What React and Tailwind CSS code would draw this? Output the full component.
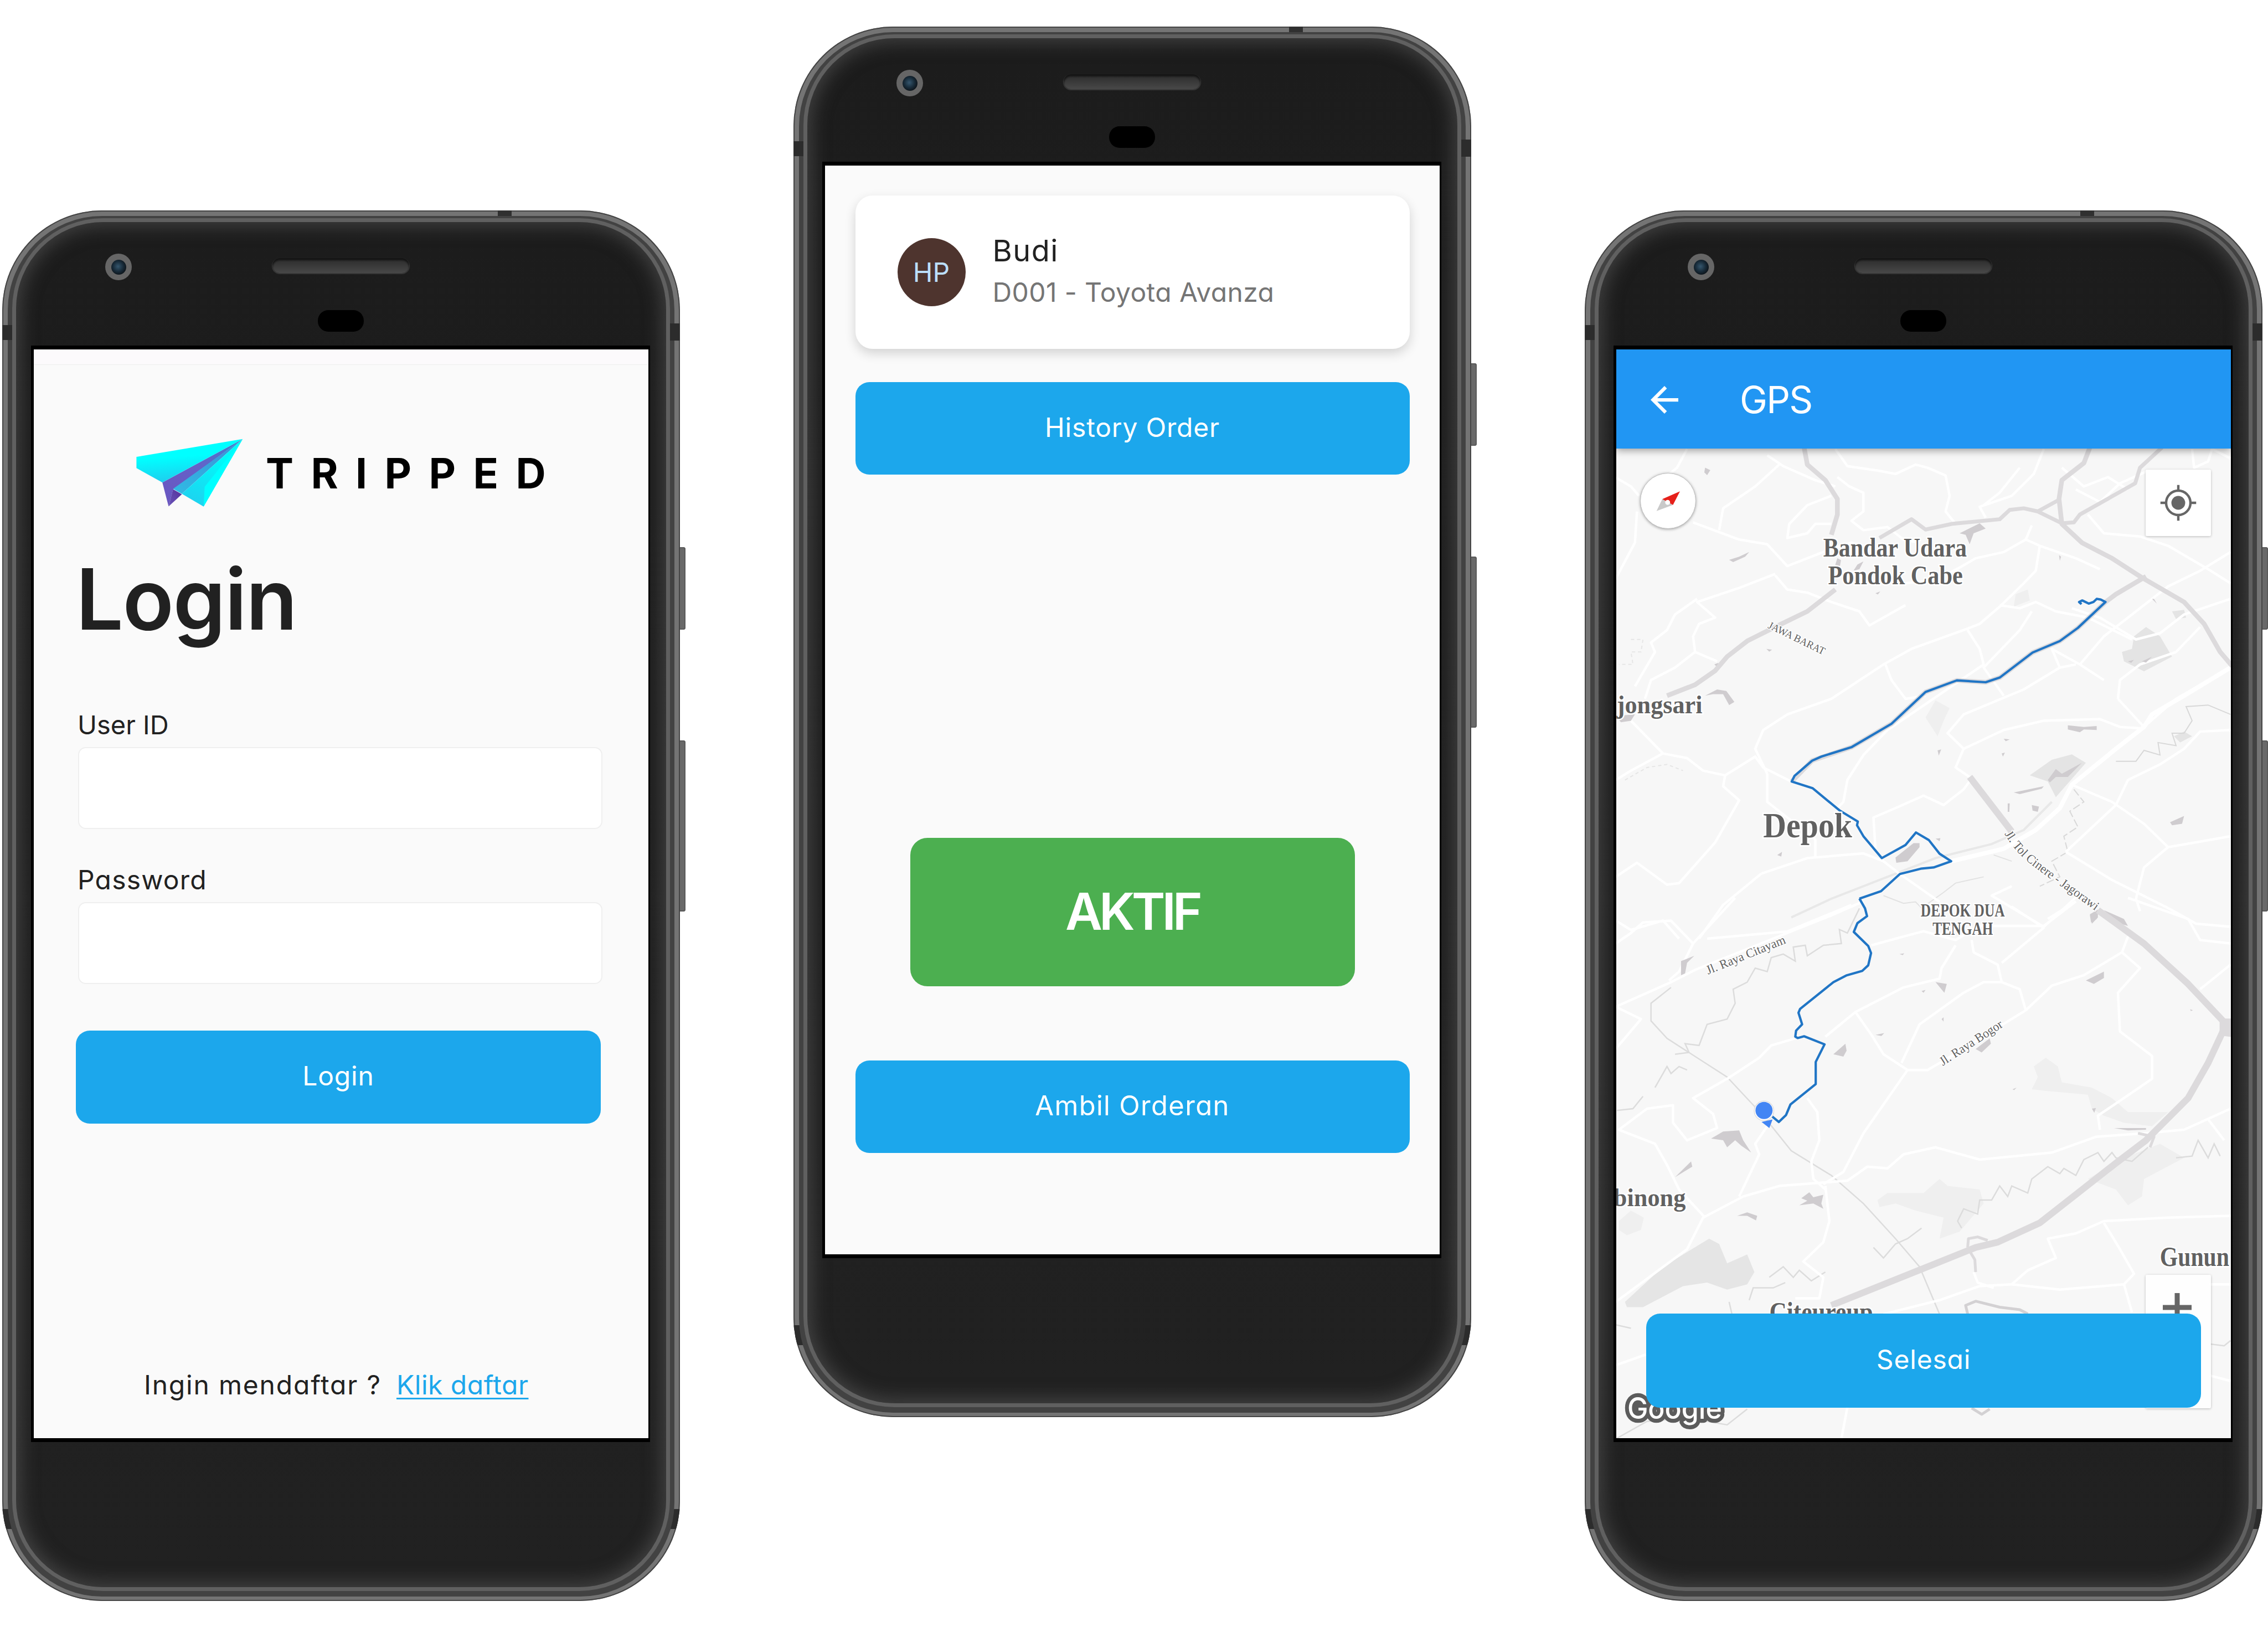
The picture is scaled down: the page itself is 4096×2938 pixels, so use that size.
import React from "react";

function Phone({ className = "", children }) {
  return (
    <div className={"relative h-[2511px] w-[1224px] shrink-0 " + className}>
      <div className="absolute left-[1218px] top-[608px] h-[149px] w-[16px] rounded-[4px] bg-[#696969] shadow-[inset_0_0_0_2px_#5a5a5a]" />
      <div className="absolute left-[1218px] top-[957px] h-[309px] w-[16px] rounded-[4px] bg-[#696969] shadow-[inset_0_0_0_2px_#5a5a5a]" />
      <div className="relative h-full w-full overflow-hidden rounded-[180px] bg-[#747474] px-[10px] pb-[8px] pt-[10px] shadow-[inset_0_0_0_2px_#454545]">
        <div className="absolute left-[895px] top-0 h-[13px] w-[25px] bg-[#303030]" />
        <div className="absolute left-0 top-[207px] z-10 h-[27px] w-[18px] bg-[#2c2c2c]" />
        <div className="absolute right-0 top-[204px] z-10 h-[31px] w-[18px] bg-[#2c2c2c]" />
        <div className="absolute left-0 top-[2345px] h-[36px] w-[28px] bg-[#2c2c2c]" />
        <div className="absolute right-0 top-[2345px] h-[36px] w-[28px] bg-[#2c2c2c]" />
        <div className="relative h-full w-full rounded-[170px] bg-[#424242] px-[8px] pb-[10px] pt-[4px]">
          <div className="h-full w-full rounded-[164px] bg-[#606060] p-[7px]">
            <div className="h-full w-full rounded-[157px] bg-gradient-to-b from-[#1c1c1c] to-[#212121] shadow-[inset_0_0_32px_8px_rgba(100,100,100,0.5)]">
              <div className="flex h-[223px] items-start pl-[161px] pt-[57px]">
                <div className="flex h-[48px] w-[48px] items-center justify-center rounded-full bg-[#666666]">
                  <div className="h-[27px] w-[27px] rounded-full bg-[radial-gradient(circle_at_45%_45%,#35566d_0%,#172a38_45%,#0b0f13_80%)]" />
                </div>
                <div className="ml-[254px] flex w-[247px] flex-col items-center">
                  <div className="mt-[8px] h-[27px] w-[247px] rounded-full bg-gradient-to-b from-[#2b2b2b] to-[#484848] shadow-[inset_0_4px_3px_#151515,0_1px_1px_1px_#3a3a3a]" />
                  <div className="mt-[67px] h-[39px] w-[83px] rounded-[19px] bg-black" />
                </div>
              </div>
              <div className="ml-[27px] w-[1118px] border-b-[7px] border-l-[5px] border-r-[3px] border-t-[7px] border-black">
                <div className="relative h-[1966px] w-[1110px] overflow-hidden bg-[#fafafa]">{children}</div>
              </div>
            </div>
          </div>
        </div>
      </div>
    </div>
  );
}

function PlaneLogo() {
  return (
    <svg viewBox="0 0 960 600" className="h-[147px] w-[236px]">
      <defs>
        <linearGradient id="wing" x1="0.4" y1="0.15" x2="0.55" y2="0.95">
          <stop offset="0.3" stopColor="#00ffff" />
          <stop offset="1" stopColor="#1fcdee" />
        </linearGradient>
        <linearGradient id="keel" x1="1" y1="0" x2="0" y2="1">
          <stop offset="0" stopColor="#3f80cf" />
          <stop offset="0.5" stopColor="#6560c8" />
          <stop offset="1" stopColor="#6a55c0" />
        </linearGradient>
        <linearGradient id="inner" x1="1" y1="0" x2="0" y2="1">
          <stop offset="0" stopColor="#3c8ed6" />
          <stop offset="1" stopColor="#30bbe4" />
        </linearGradient>
        <linearGradient id="right" x1="0.7" y1="0.3" x2="0.4" y2="1">
          <stop offset="0" stopColor="#00fafa" />
          <stop offset="1" stopColor="#1dd4f0" />
        </linearGradient>
        <linearGradient id="tail" x1="0" y1="1" x2="1" y2="0">
          <stop offset="0" stopColor="#6a55b8" />
          <stop offset="1" stopColor="#54309c" />
        </linearGradient>
      </defs>
      <path d="M828 48 236 368 282 545 315 420Z" fill="url(#keel)" />
      <path d="M315 418 282 545 380 455Z" fill="url(#tail)" />
      <path d="M828 48 45 180V262L236 368Z" fill="url(#wing)" />
      <path d="M828 48 315 415 380 452Z" fill="url(#inner)" />
      <path d="M828 48 380 452 540 546Z" fill="url(#right)" />
      <path d="M828 48 548 400 540 546Z" fill="#00ffff" />
    </svg>
  );
}

function LoginScreen() {
  return (
    <div className="flex h-full flex-col">
      <div className="h-[28px] shrink-0 border-b border-[#eeeeee] bg-[#fcfafc]" />
      <div className="mt-[122px] flex items-center pl-[174px]">
        <PlaneLogo />
        <span className="ml-[9px] text-[75px] font-bold leading-[80px] tracking-[31.4px] text-black">TRIPPED</span>
      </div>
      <h1 className="ml-[76px] mt-[74px] text-[152px] font-semibold leading-[160px] tracking-[-1.5px] text-[#212121]">Login</h1>
      <label className="ml-[79px] mt-[119px] text-[47px] leading-[56px] text-[#212121]">User ID</label>
      <div className="ml-[80px] mt-[12px] h-[148px] w-[947px] rounded-[14px] border-2 border-[#efefef] bg-white" />
      <label className="ml-[79px] mt-[64px] text-[48px] leading-[56px] tracking-[1.2px] text-[#212121]">Password</label>
      <div className="ml-[80px] mt-[12px] h-[148px] w-[947px] rounded-[14px] border-2 border-[#efefef] bg-white" />
      <button className="ml-[76px] mt-[84px] h-[168px] w-[948px] rounded-[25px] bg-[#1ca7ec] pb-[5px] text-[48px] tracking-[0.8px] text-white">Login</button>
      <div className="mt-[442px] flex pl-[199px] text-[48px] leading-[60px] text-[#212121]">
        <span className="w-[456px] whitespace-nowrap tracking-[1.8px]">Ingin mendaftar ?</span>
        <a className="tracking-[0.5px] text-[#1ca7ec] underline decoration-[3px] underline-offset-[6px]">Klik daftar</a>
      </div>
    </div>
  );
}

function DriverScreen() {
  return (
    <div className="flex h-full flex-col items-center">
      <div className="mt-[54px] flex h-[277px] w-[1001px] shrink-0 items-start rounded-[31px] bg-white pl-[76px] pt-[77px] shadow-[0_8px_20px_rgba(0,0,0,0.16)]">
        <div className="flex h-[123px] w-[123px] items-center justify-center rounded-full bg-[#4e342e] text-[48px] text-[#bbdefb]">HP</div>
        <div className="ml-[49px] mt-[-7px] flex flex-col">
          <span className="text-[54px] leading-[60px] tracking-[1.5px] text-[#212121]">Budi</span>
          <span className="mt-[15px] text-[48px] leading-[60px] tracking-[0.4px] text-[#757575]">D001 - Toyota Avanza</span>
        </div>
      </div>
      <button className="mt-[60px] h-[167px] w-[1001px] rounded-[25px] bg-[#1ca7ec] pb-[4px] text-[48px] tracking-[0.8px] text-white">History Order</button>
      <button className="mt-[656px] h-[268px] w-[803px] rounded-[31px] bg-[#4caf50] pb-[2px] text-[92px] font-semibold tracking-[-6px] text-white">AKTIF</button>
      <button className="mt-[134px] h-[167px] w-[1001px] rounded-[25px] bg-[#1ca7ec] pb-[4px] text-[49px] tracking-[1.3px] text-white">Ambil Orderan</button>
    </div>
  );
}

const whiteNorth = [
  "M20 90 60 120 80 150", "M200 0 175 60 90 150", "M75 200 70 300 20 420", "M215 235 330 290 400 305 450 375 560 320 610 300 640 310",
  "M430 50 370 120 290 190 280 260", "M400 20 440 55 520 100 570 120", "M570 0 600 55 680 70 720 80 770 50 800 60 845 85 855 150 845 200 870 240",
  "M575 90 605 120 640 140 640 200 610 230 640 260 700 250 740 290 780 300", "M560 240 520 240 500 270 450 285 455 240 500 180 560 150",
  "M1090 0 1065 80 1010 150 930 185 945 220", "M1135 60 1190 120 1250 90 1300 130", "M1170 130 1230 170 1280 110 1350 70", "M1460 0 1465 60 1500 40 1510 0 1556 30",
  "M1200 210 1240 270 1330 280 1400 310 1500 385 1556 430", "M1556 330 1480 390 1400 440 1320 520 1240 600 1180 690",
  "M1556 480 1440 530 1380 590 1320 610 1230 540 1160 510", "M1060 245 1045 290 1080 310 1170 350 1230 385",
  "M1045 290 990 330 920 350 880 380 820 420 745 430", "M1080 310 1070 390 1040 430 980 505 930 560 900 575 760 640 690 690 560 800 450 850 390 900 370 960 400 1040",
  "M980 500 1030 510 1070 490 1120 520 1200 540 1310 610", "M900 580 930 640 940 690 700 900 640 980 600 1060 590 1130 575 1150",
  "M1060 520 1030 580 940 700 990 790", "M695 690 710 740 745 800 795 790", "M420 400 330 445 225 490 270 540 230 560 215 600 220 650 275 680",
  "M225 480 170 530 150 580 110 620 120 650 70 760", "M220 650 170 700 110 740 95 800", "M420 405 450 450 500 460 560 490 630 520 655 565 745 500",
  "M60 870 140 975 200 990 240 1030 295 1045 370 985 390 1020 460 1065", "M140 975 60 1030 22 1060", "M295 1045 290 1080 330 1125 270 1260 180 1390 150 1395 75 1325 22 1370",
  "M400 1040 400 1130 520 1250 520 1310", "M385 1360 500 1310 640 1295 690 1320 730 1360 830 1450", "M385 1360 290 1460 230 1568",
  "M860 1320 990 1280 1070 1220 1130 1150 1160 1075 1270 960 1340 890 1420 800 1556 700", "M1340 895 1280 890 1230 865 1090 870 990 900 890 960 850 910 890 850 1040 770 1130 700 1170 690",
  "M890 960 870 1020 910 1055 890 1090 840 1140 790 1110 720 1150 665 1180 670 1280", "M1160 1075 1260 1130 1340 1200 1400 1275 1340 1340 1320 1440 1330 1480",
  "M1275 800 1280 740 1330 690 1420 650 1480 570", "M1275 800 1340 890", "M1556 900 1480 905 1440 960 1380 1010 1300 1060 1270 1140 1145 1290",
  "M1145 1290 1260 1380 1400 1470 1470 1520 1556 1530", "M1400 1275 1490 1255 1556 1240", "M1175 1430 1090 1530 960 1430 1010 1400", "M22 1510 60 1540 140 1510 180 1568",
  "M610 1460 450 1545 250 1568", "M1030 60 980 140 940 180", "M1130 700 1110 640 1180 690 1240 740",
];
const whiteSouth = [
  "M640 10 560 50 450 100 220 205 160 240 22 310 85 345 22 430", "M22 130 60 100 90 70 160 65 215 130 180 210 155 235", "M215 130 320 0",
  "M660 135 740 110 790 95 870 120 930 80 1090 80 1170 10", "M910 120 915 155 975 190 985 240 1030 260 1045 320", "M985 185 1090 85 1010 25",
  "M870 135 835 200 830 230 740 255 680 290 620 325 545 395", "M620 325 660 390 690 445 750 490 800 490 860 450 1045 320 1110 250 1190 220 1285 155 1300 110",
  "M985 240 940 240 890 270 780 360 735 470", "M1285 155 1330 200 1275 270 1280 380 1360 450 1360 515 1290 570 1225 620 1230 660",
  "M750 490 640 670 590 780 540 815", "M470 400 410 420 380 455 300 515 215 570 265 615 275 655 200 690 165 640 165 590 100 600 30 660 120 700 150 760 180 830 245 910",
  "M500 570 525 610 530 690 510 750 515 800 545 830", "M400 650 370 700 380 730 330 850", "M22 1150 200 1000 240 910 340 850 430 820 600 805 650 765 700 770 740 730 820 710 930 745 1110 725 1220 680 1340 670 1440 660 1556 600",
  "M545 820 555 920 540 980 490 1035 540 1080 530 1140 470 1140", "M1100 60 1170 10", "M1556 905 1400 910 1240 920 1170 955 1100 970 1120 1025 1050 1060 1010 1100 930 1105 830 1145 690 1185",
  "M1240 925 1280 1000 1315 1070 1290 1100 1130 1115 1010 1100", "M915 1065 925 1095 965 1110", "M1290 1100 1310 1180", "M1500 630 1540 690", "M1300 0 1450 60 1480 120 1556 130", "M1556 190 1480 260",
  "M600 1450 585 1540", "M22 1330 97 1300", "M1505 1100 1556 1100", "M1505 1360 1556 1375",
];
const streams = [
  "M630 30 600 100 580 90 585 130 540 135 500 165 495 135 465 140 470 180 440 160 410 170 400 210 370 200 350 240 315 260 320 300 300 345 250 360 230 420 195 415 205 440 170 445",
  "M200 490 180 480 160 500 150 480 120 540", "M90 565 65 600 25 605", "M160 255 110 300 110 350 150 400 300 510 390 620 460 720 560 790 640 870 720 970 780 1050 830 1185",
  "M1350 710 1310 750 1270 740 1260 725 1240 750 1225 725 1190 745 1170 790 1140 770 1130 785 1100 765 1060 800 1050 840 1010 820 1000 850 980 820 960 860 930 860 925 900 890 885 875 920 885 940",
  "M1420 740 1460 735 1475 690 1500 740 1515 700 1530 735", "M785 940 750 970 720 985 690 1025 665 995", "M405 1080 440 1050 465 1080 480 1060 510 1090 545 1065", "M355 1145 365 1110 415 1110 445 1095",
  "M305 1150 312 1185", "M1505 1270 1540 1275 1556 1260", "M22 1540 100 1490 200 1480 300 1500 350 1455", "M22 1215 60 1225",
];
const patchesNorth = [
  "M1345 570 1380 600 1410 665 1340 712 1290 680 1285 650 1310 640 1315 600Z", "M1055 1045 1110 995 1160 978 1195 1005 1120 1115 1100 1065Z",
  "M1410 520 1440 515 1445 540 1420 545Z", "M1440 905 1460 920 1430 940 1415 920Z",
];
const palePatchesNorth = ["M820 805 855 830 840 870 825 920 795 860Z", "M1020 465 1050 450 1055 485 1015 505Z"];
const patchesSouth = [
  "M45 1150 140 1050 255 970 280 985 300 1040 350 1015 368 1065 350 1100 300 1115 250 1095 190 1105 90 1165 50 1165Z",
  "M675 860 700 840 790 840 830 800 850 820 930 830 940 870 880 950 830 970 840 910 770 890 720 870 680 880Z",
  "M1095 455 1125 480 1135 525 1210 540 1260 570 1300 610 1400 610 1360 650 1290 640 1240 620 1210 600 1200 560 1100 550 1060 545 1075 510 1065 480Z",
  "M1200 800 1290 740 1380 700 1440 740 1340 800 1335 850 1300 875 1270 830Z", "M30 920 60 890 92 910 85 945 50 960 30 945Z",
];
const darkNorth = [
  "M880 270 930 238 945 255 915 270 905 305 895 275Z", "M1150 885 1190 890 1222 887 1222 900 1190 898 1180 907 1150 898Z", "M765 1262 780 1262 780 1275 750 1320 722 1325 720 1308Z",
  "M305 355 330 345 355 330 345 345 315 362Z", "M245 790 275 770 298 775 318 810 305 820 290 785 265 785Z", "M1205 1490 1225 1475 1225 1500 1210 1520Z", "M1060 1140 1078 1145 1075 1162 1062 1158Z",
  "M1405 1195 1440 1175 1435 1200 1410 1205Z", "M1015 1100 1090 1080 1085 1088 1030 1105Z", "M575 350 584 356 580 385 568 378Z", "M625 370 640 360 630 385 615 390Z", "M1365 480 1372 495 1360 480Z", "M22 855 70 850 60 870 35 875Z",
  "M245 60 258 68 250 84 243 75Z", "M825 965 834 962 828 982Z", "M985 975 993 972 988 985Z", "M1000 1135 1005 1135 1004 1162 1000 1162Z", "M990 928 1005 930 995 936Z", "M268 690 278 685 275 698Z", "M398 640 412 643 405 649Z",
  "M1128 340 1133 345 1130 358Z", "M425 1300 437 1290 435 1305Z", "M820 1248 832 1246 830 1256Z", "M1100 1060 1120 1025 1135 1040 1185 1005 1150 1050 1120 1050 1105 1068Z", "M1300 680 1315 675 1308 685Z", "M1335 680 1360 665 1345 684Z", "M670 462 682 456 676 466Z",
];
const darkSouth = [
  "M260 685 290 665 330 662 340 690 360 725 335 705 320 690 300 710 290 690Z", "M170 795 210 750 213 765Z", "M485 855 505 838 515 852 540 845 535 870 540 885 515 870 480 875 500 862Z",
  "M325 905 350 895 375 905 372 918 350 905Z", "M565 445 595 415 598 435 590 452Z", "M1195 235 1240 210 1240 228 1215 245Z", "M185 220 185 180 218 165 200 185 195 215Z", "M820 240 848 245 842 270Z",
  "M920 430 955 400 958 415 935 440Z", "M1265 655 1345 655 1345 660 1300 662Z", "M1205 50 1222 40 1222 60 1208 70Z", "M1240 35 1290 60 1300 80 1270 70Z", "M670 390 692 385 685 393Z",
  "M835 345 840 340 840 352Z", "M1210 600 1220 598 1216 612Z", "M1012 545 1022 540 1016 547Z", "M730 160 742 158 738 163Z", "M1455 317 1462 320 1457 322Z", "M785 265 795 262 790 270Z",
];

function Map() {
  const north = "translate(3940 1100) scale(.98214 .76531)";
  const south = "translate(3940 2200) scale(.98214 .86097)";
  const scaled = "[&_path]:[vector-effect:non-scaling-stroke]";
  const label = "font-['Liberation_Serif',serif] fill-[#616161] stroke-white [paint-order:stroke]";
  return (
    <svg viewBox="3963 1099 1506 2425" preserveAspectRatio="none" className={"block h-[1787px] w-[1110px] " + scaled}>
      <rect x="3963" y="1099" width="1506" height="2426" fill="#f7f7f7" />
      <g transform={north} fill="#e4e4e4">{patchesNorth.map((d) => <path key={d} d={d} />)}</g>
      <g transform={north} fill="#efefef">{palePatchesNorth.map((d) => <path key={d} d={d} />)}</g>
      <g transform={south} fill="#efefef">{patchesSouth.map((d, i) => <path key={d} d={d} fill={i ? undefined : "#e5e5e5"} />)}</g>
      <g transform={south} fill="none" stroke="#dcdcdc" strokeWidth="2.5">{streams.map((d) => <path key={d} d={d} />)}</g>
      <g transform={north} fill="none" stroke="#d8d8d8" strokeWidth="2">
        <path d="M1556 850 1500 820 1445 825 1460 870 1440 910 1410 910 1420 950 1375 940 1380 980 1340 965 1320 1000 1270 1000" />
        <path d="M1165 1090 1190 1130 1155 1160 1175 1210 1140 1240 1150 1290 1110 1320 1130 1370 1080 1400" strokeDasharray="14 5" />
        <path d="M460 1500 560 1440 700 1370 820 1310 960 1265 1040 1220 1110 1130" stroke="#e8e8e8" strokeWidth="4" />
        <path d="M60 610 90 610 85 650 60 650 65 690 30 690" stroke="#e6e6e6" strokeDasharray="6 5" />
        <path d="M45 1060 100 1020 150 1010 190 1030" stroke="#e6e6e6" strokeDasharray="6 5" />
        <path d="M690 1430 740 1455 770 1450 785 1470 840 1420 870 1390 940 1370M965 1300 1010 1320" stroke="#e2e2e2" />
      </g>
      <g transform={north} fill="none" stroke="#fff" strokeWidth="4.5" strokeLinejoin="round">{whiteNorth.map((d) => <path key={d} d={d} />)}</g>
      <g transform={south} fill="none" stroke="#fff" strokeWidth="4.5" strokeLinejoin="round">{whiteSouth.map((d) => <path key={d} d={d} />)}</g>
      <g transform={north} fill="none" stroke="#fff" strokeWidth="8" strokeLinejoin="round">
        <path d="M860 1320 990 1280 1070 1220 1130 1150 1160 1075 1270 960 1340 890 1360 850 1440 790 1556 700" />
      </g>
      <g transform={north} fill="#cfcccf">{darkNorth.map((d) => <path key={d} d={d} />)}</g>
      <g transform={south} fill="#cfcccf">{darkSouth.map((d) => <path key={d} d={d} />)}</g>
      <g transform={north} fill="none" stroke="#dcdadc" strokeWidth="8.5" strokeLinejoin="round">
        <path d="M492-5 500 50 545 100 575 160 575 210 560 275" />
        <path d="M1205-5 1190 45 1135 100 1128 160 1135 240 1185 300 1260 350 1335 412 1440 490 1490 560 1530 650 1560 695" />
        <path d="M1385-5 1330 60 1318 110 1180 210 1165 235 1135 238" strokeWidth="7" />
        <path d="M680 285 760 225 795 258 860 240 980 225 1005 195 1040 190 1075 200 1135 238M1075 200 1125 165" strokeWidth="7" />
        <path d="M570 450 500 520 420 570 350 615 300 665 270 710 220 755 150 790" />
        <path d="M1345 408 1270 465 1244 490 1175 573 1130 615 1062 652 980 732 945 747 873 741 795 778 710 880 610 955 512 998 461 1065" />
        <path d="M905 1050 1010 1225" strokeWidth="12" />
      </g>
      <g transform={south} fill="none" stroke="#dcdadc" strokeWidth="12" strokeLinejoin="round">
        <path d="M1225 35 1340 130 1450 245 1545 360 1500 470 1450 570 1345 690 1270 755 1080 925 975 980 920 995 560 1160" />
        <path d="M1530 345 1560 345 1560 395 1530 390Z" fill="#dcdadc" strokeWidth="2" />
        <path d="M900 995 902 970 925 965 950 975M905 1005 918 1030 920 1065" strokeWidth="5" />
        <path d="M1325 670 1365 680 1355 710" strokeWidth="5" />
        <path d="M900 1184 895 1160 920 1148 980 1165 1030 1172 1050 1184" stroke="#d3d1d3" strokeWidth="5" />
        <path d="M910 1452 935 1470 955 1455" stroke="#d3d1d3" strokeWidth="5" />
      </g>
      <g fill="none" stroke="#2075c5" strokeWidth="4.2" strokeLinejoin="round">
        <path transform={north} d="M1184 497 1178 490 1186 485 1202 495 1214 490 1222 480 1232 482 1244 490 1175 573 1130 615 1062 652 980 732 945 747 873 741 795 778 710 880 610 955 535 985 512 998 468 1047 461 1065 513 1086 580 1157 626 1193 624 1205 640 1240 686 1310 745 1268 771 1228 803 1252 830 1296 859 1320 815 1340 783 1344 731 1361 684 1416 630 1440" />
        <path transform={south} d="M630 2 644 30 649 52 625 72 616 97 652 137 659 157 652 192 637 208 597 221 565 240 482 316 478 327 487 360 472 378 470 395 476 399 492 394 543 417 521 467 521 530 458 588 447 618 429 638 412 622" />
      </g>
      <circle cx="4325" cy="2722" r="24" fill="#fff" stroke="#dedede" strokeWidth="2" />
      <circle cx="4325" cy="2721" r="21" fill="#4285f4" />
      <path d="M4319 2749 4346 2743 4338 2764Z" fill="#4285f4" />
      <g className={label + " font-bold"} strokeWidth="7">
        <text x="4470" y="1364" fontSize="66" textLength="352" lengthAdjust="spacingAndGlyphs">Bandar Udara</text>
        <text x="4482" y="1432" fontSize="66" textLength="330" lengthAdjust="spacingAndGlyphs">Pondok Cabe</text>
        <text x="3964" y="1747" fontSize="64" textLength="210" lengthAdjust="spacingAndGlyphs">jongsari</text>
        <text x="4323" y="2051" fontSize="86" textLength="218" lengthAdjust="spacingAndGlyphs">Depok</text>
        <text x="4709" y="2246" fontSize="46" textLength="206" lengthAdjust="spacingAndGlyphs">DEPOK DUA</text>
        <text x="4738" y="2291" fontSize="46" textLength="148" lengthAdjust="spacingAndGlyphs">TENGAH</text>
        <text x="3956" y="2956" fontSize="64" textLength="177" lengthAdjust="spacingAndGlyphs">binong</text>
        <text x="5295" y="3102" fontSize="68" textLength="170" lengthAdjust="spacingAndGlyphs">Gunun</text>
        <text x="4338" y="3238" fontSize="70" textLength="254" lengthAdjust="spacingAndGlyphs">Citeureup</text>
      </g>
      <g className={label} strokeWidth="4">
        <text transform="translate(4333 1538) rotate(26)" fontSize="26" textLength="152" lengthAdjust="spacingAndGlyphs">JAWA BARAT</text>
        <text transform="translate(4188 2388) rotate(-22)" fontSize="31" textLength="207" lengthAdjust="spacingAndGlyphs">Jl. Raya Citayam</text>
        <text transform="translate(4763 2612) rotate(-33)" fontSize="31" textLength="178" lengthAdjust="spacingAndGlyphs">Jl. Raya Bogor</text>
        <path id="tollway" d="M4914 2043Q4940 2088 4982 2120T5062 2178Q5102 2206 5152 2243" fill="none" stroke="none" />
        <text fontSize="31" textLength="294" lengthAdjust="spacingAndGlyphs"><textPath href="#tollway">Jl. Tol Cinere - Jagorawi</textPath></text>
      </g>
      <text x="3990" y="3476" fontSize="72" textLength="232" lengthAdjust="spacingAndGlyphs" strokeWidth="20" className="fill-white stroke-[#5c5c5c] font-medium [paint-order:stroke]" strokeLinejoin="round">Google</text>
    </svg>
  );
}

function GpsScreen() {
  return (
    <div className="flex h-full flex-col">
      <header className="relative z-10 flex h-[179px] shrink-0 items-center bg-[#2196f3] pl-[62px] text-white shadow-[0_3px_14px_rgba(0,0,0,0.4)]">
        <svg viewBox="4 4 16 16" className="mt-[2px] h-[50px] w-[50px]" fill="currentColor">
          <path d="M20 11H7.83l5.59-5.59L12 4l-8 8 8 8 1.41-1.41L7.83 13H20v-2z" />
        </svg>
        <span className="ml-[111px] mt-[2px] text-[67px] leading-[80px] tracking-[-1.800px]">GPS</span>
      </header>
      <div className="relative h-[1787px]">
        <Map />
        <div className="absolute left-[43px] top-[44px] flex h-[101px] w-[101px] items-center justify-center rounded-full border border-[#bdbdbd] bg-white shadow-[0_1px_5px_rgba(0,0,0,0.35)]">
          <svg viewBox="-29 -24 58 48" className="h-[36px] w-[43px]">
            <path d="M-28 24-14-5 12 9Z" fill="#c9c9c9" />
            <path d="M29-24-14-5 12 9Z" fill="#e6201a" />
            <circle r="6" cx="-1" cy="3" fill="#fff" />
          </svg>
        </div>
        <div className="absolute left-[956px] top-[38px] flex h-[120px] w-[118px] items-center justify-center rounded-[3px] bg-white/95 shadow-[0_1px_4px_rgba(0,0,0,0.25)]">
          <svg viewBox="-45 -45 90 90" className="h-[66px] w-[66px]" fill="none" stroke="#666" strokeWidth="6">
            <circle r="30" />
            <circle r="17" fill="#666" stroke="none" />
            <path d="M0-44V-30M0 30V44M-44 0H-30M30 0H44" />
          </svg>
        </div>
        <div className="absolute left-[956px] top-[1492px] h-[241px] w-[118px] rounded-[3px] bg-white/90 shadow-[0_1px_4px_rgba(0,0,0,0.25)]">
          <svg viewBox="0 0 52 52" className="absolute left-[31px] top-[33px] h-[52px] w-[52px]" fill="#666">
            <path d="M21.500 0h9v21.500H52v9H30.500V52h-9V30.500H0v-9h21.500z" />
          </svg>
        </div>
        <button className="absolute left-[54px] top-[1562px] h-[170px] w-[1002px] rounded-[25px] bg-[#1ca7ec] pb-[5px] text-[48px] tracking-[0.8px] text-white">Selesai</button>
      </div>
    </div>
  );
}

export default function App() {
  return (
    <main className="flex h-[2938px] w-[4096px] items-start gap-[205px] overflow-hidden bg-white pl-[4px] pt-[48px] font-['Inter',sans-serif] [font-feature-settings:'cv11']">
      <Phone className="mt-[332px]"><LoginScreen /></Phone>
      <Phone><DriverScreen /></Phone>
      <Phone className="mt-[332px]"><GpsScreen /></Phone>
    </main>
  );
}
